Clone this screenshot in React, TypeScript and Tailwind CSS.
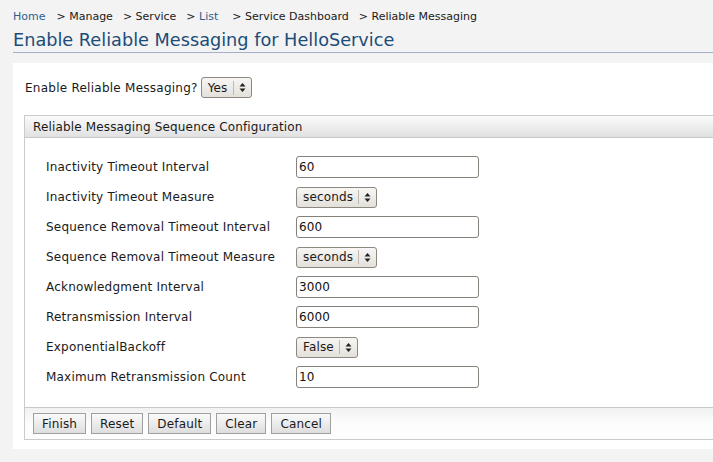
import React from 'react'

const font = { fontFamily: '"DejaVu Sans", Verdana, sans-serif' }

function Arrows() {
  return (
    <svg width="7" height="11" viewBox="0 0 7 11" className="block">
      <path d="M3.5 1 L6.5 4.5 L0.5 4.5 Z" fill="#222" />
      <path d="M3.5 10 L6.5 6.5 L0.5 6.5 Z" fill="#222" />
    </svg>
  )
}

function Select({ value }: { value: string }) {
  return (
    <div className="inline-flex items-center h-[21px] rounded-[3px] border border-[#8d887f] bg-gradient-to-b from-[#f7f6f4] to-[#e4e1dc] pl-[6px] pr-[5px] text-[12px] tracking-[0.15px] text-[#1a1a1a]">
      <span className="pr-[5px]">{value}</span>
      <span className="w-px h-[14px] bg-[#bdb8b0] mr-[5px]" />
      <Arrows />
    </div>
  )
}

function TextInput({ value }: { value: string }) {
  return (
    <div className="flex items-center w-[183px] h-[22px] rounded-[3px] border border-[#86827b] bg-white pl-[2px] text-[12px] tracking-[0.15px] text-[#111]">
      {value}
    </div>
  )
}

const rows: { label: string; kind: 'input' | 'select'; value: string }[] = [
  { label: 'Inactivity Timeout Interval', kind: 'input', value: '60' },
  { label: 'Inactivity Timeout Measure', kind: 'select', value: 'seconds' },
  { label: 'Sequence Removal Timeout Interval', kind: 'input', value: '600' },
  { label: 'Sequence Removal Timeout Measure', kind: 'select', value: 'seconds' },
  { label: 'Acknowledgment Interval', kind: 'input', value: '3000' },
  { label: 'Retransmission Interval', kind: 'input', value: '6000' },
  { label: 'ExponentialBackoff', kind: 'select', value: 'False' },
  { label: 'Maximum Retransmission Count', kind: 'input', value: '10' },
]

const buttons = ['Finish', 'Reset', 'Default', 'Clear', 'Cancel']

export default function App() {
  return (
    <div className="w-[713px] h-[462px] overflow-hidden bg-[#f3f3f3] text-[#1a1a1a]" style={font}>
      {/* breadcrumb */}
      <div className="flex items-center h-[14px] mt-[10px] pl-[13px] text-[11px] text-[#1a1a1a]">
        <span className="text-[#2e5f8f] mr-[11px]">Home</span>
        <span className="mr-[10px]">&gt; Manage</span>
        <span className="mr-[10px]">&gt; Service</span>
        <span className="mr-[14px]">
          &gt; <span className="text-[#2e5f8f]">List</span>
        </span>
        <span className="mr-[10px]">&gt; Service Dashboard</span>
        <span>&gt; Reliable Messaging</span>
      </div>

      {/* title */}
      <div className="ml-[13px] mt-[5px] pb-[1px] border-b border-[#a3b2c9]">
        <h1 className="text-[17.7px] leading-[22px] text-[#1c4c78]">Enable Reliable Messaging for HelloService</h1>
      </div>

      {/* content panel */}
      <div className="ml-[13px] mt-[10px] bg-white h-[386px] pt-[14px]">
        <div className="flex items-center pl-[12px] text-[12px] tracking-[0.25px]">
          <span className="mr-[3px]">Enable Reliable Messaging?</span>
          <Select value="Yes" />
        </div>

        <div className="ml-[11px] mt-[17px] border border-r-0 border-[#cbcbcb]">
          <div className="h-[22px] flex items-center pl-[8px] text-[12px] tracking-[0.15px] bg-gradient-to-b from-[#fbfbfb] to-[#e1e1e1] border-b border-[#c8c8c8]">
            Reliable Messaging Sequence Configuration
          </div>

          <div className="pt-[18px] pb-[19px] pl-[21px] flex flex-col gap-[8px]">
            {rows.map((r) => (
              <div key={r.label} className="flex items-center h-[22px] text-[12px] tracking-[0.2px]">
                <span className="w-[250px] shrink-0">{r.label}</span>
                {r.kind === 'input' ? <TextInput value={r.value} /> : <Select value={r.value} />}
              </div>
            ))}
          </div>

          <div className="border-t border-[#c8c8c8] bg-gradient-to-b from-[#f1f1f1] via-[#fdfdfd] to-[#fdfdfd] h-[32px] flex items-center gap-[5px] pl-[8px]">
            {buttons.map((b) => (
              <button
                key={b}
                className="h-[21px] px-[8px] border border-[#a0a0a0] bg-gradient-to-b from-[#fafafa] to-[#dedede] text-[12px] tracking-[0.15px] text-[#1a1a1a] leading-none"
                style={font}
              >
                {b}
              </button>
            ))}
          </div>
        </div>
      </div>
    </div>
  )
}
